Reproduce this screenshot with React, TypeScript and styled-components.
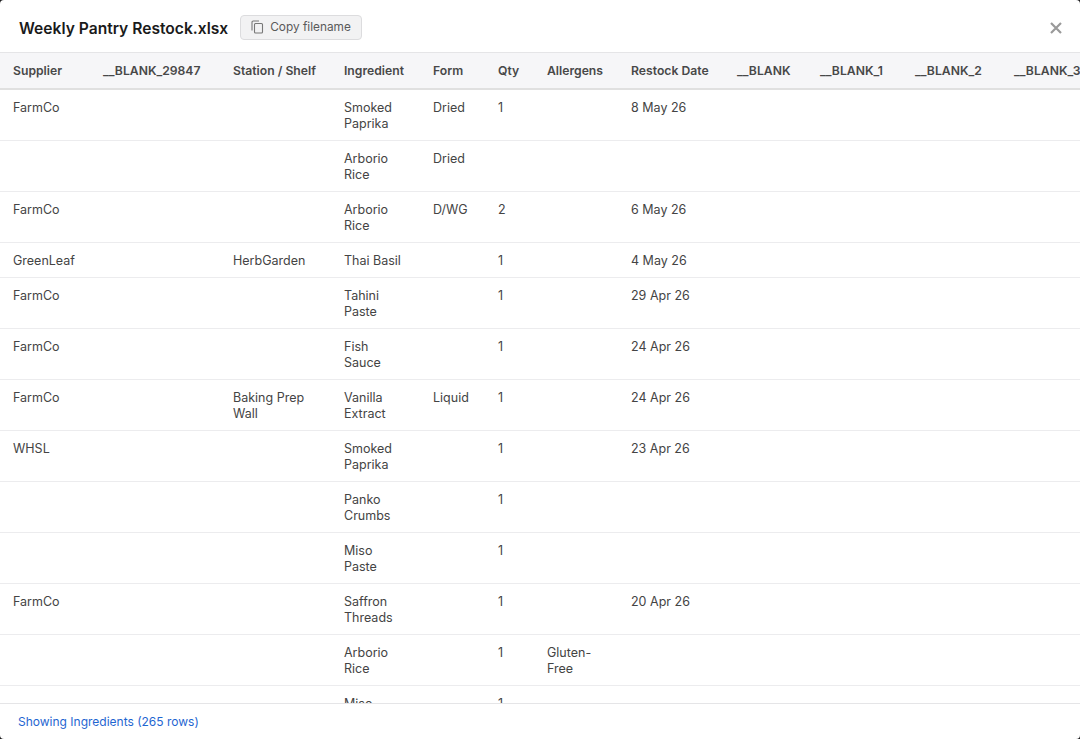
import React from 'react'
import styled, { createGlobalStyle } from 'styled-components'

const GlobalStyle = createGlobalStyle`
  html, body {
    margin: 0;
    height: 100%;
    background: #1c1c1e;
    font-family: Inter, "Liberation Sans", sans-serif;
  }
  #root {
    height: 100%;
  }
`

const Modal = styled.div`
  height: 739px;
  width: 1080px;
  display: flex;
  flex-direction: column;
  background: #fff;
  border-radius: 4px;
  overflow: hidden;
`

const Header = styled.header`
  height: 49px;
  flex-shrink: 0;
  display: flex;
  align-items: center;
  gap: 12px;
  padding: 3px 18px 0 19px;
  border-bottom: 1px solid #e5e5e7;
`

const Title = styled.h2`
  margin: 1px 0 0;
  font-size: 15.6px;
  font-weight: 600;
  color: #1a1a1a;
  white-space: nowrap;
`

const CopyButton = styled.button`
  display: flex;
  align-items: center;
  gap: 6px;
  height: 25px;
  padding: 0 10px;
  margin-top: -1px;
  background: #f2f2f3;
  border: 1px solid #dcdcde;
  border-radius: 4px;
  font: inherit;
  font-size: 11.85px;
  color: #5a5a5a;
`

const CloseButton = styled.button`
  margin-left: auto;
  margin-top: 1px;
  padding: 0;
  display: flex;
  background: none;
  border: 0;
  color: #9a9a9a;
`

const TableWrap = styled.div`
  flex: 1;
  min-height: 0;
  overflow: hidden;
`

const Table = styled.table`
  table-layout: fixed;
  width: 1100px;
  border-collapse: separate;
  border-spacing: 0;
  font-size: 12.5px;
  line-height: 16px;
  color: #444;
`

const HeadCell = styled.th`
  height: 35px;
  padding: 0 13px;
  text-align: left;
  font-size: 12.2px;
  font-weight: 600;
  color: #484848;
  white-space: nowrap;
  background: #f6f6f8;
  border-bottom: 2px solid #e0e0e0;
`

const Cell = styled.td`
  padding: 10px 13px 8px;
  vertical-align: top;
  border-bottom: 1px solid #ececee;
`

const Footer = styled.footer`
  height: 35px;
  flex-shrink: 0;
  display: flex;
  align-items: center;
  padding: 0 18px;
  border-top: 1px solid #e5e5e7;
  font-size: 12px;
  color: #1f66d1;
`

const columns: [string, number][] = [
  ['Supplier', 90],
  ['__BLANK_29847', 130],
  ['Station / Shelf', 111],
  ['Ingredient', 89],
  ['Form', 65],
  ['Qty', 49],
  ['Allergens', 84],
  ['Restock Date', 106],
  ['__BLANK', 83],
  ['__BLANK_1', 95],
  ['__BLANK_2', 99],
  ['__BLANK_3', 99],
]

type Row = {
  supplier?: string
  station?: string
  ingredient: string
  form?: string
  qty?: string
  allergens?: string
  date?: string
}

const rows: Row[] = [
  { supplier: 'FarmCo', ingredient: 'Smoked Paprika', form: 'Dried', qty: '1', date: '8 May 26' },
  { ingredient: 'Arborio Rice', form: 'Dried' },
  { supplier: 'FarmCo', ingredient: 'Arborio Rice', form: 'D/WG', qty: '2', date: '6 May 26' },
  { supplier: 'GreenLeaf', station: 'HerbGarden', ingredient: 'Thai Basil', qty: '1', date: '4 May 26' },
  { supplier: 'FarmCo', ingredient: 'Tahini Paste', qty: '1', date: '29 Apr 26' },
  { supplier: 'FarmCo', ingredient: 'Fish Sauce', qty: '1', date: '24 Apr 26' },
  { supplier: 'FarmCo', station: 'Baking Prep Wall', ingredient: 'Vanilla Extract', form: 'Liquid', qty: '1', date: '24 Apr 26' },
  { supplier: 'WHSL', ingredient: 'Smoked Paprika', qty: '1', date: '23 Apr 26' },
  { ingredient: 'Panko Crumbs', qty: '1' },
  { ingredient: 'Miso Paste', qty: '1' },
  { supplier: 'FarmCo', ingredient: 'Saffron Threads', qty: '1', date: '20 Apr 26' },
  { ingredient: 'Arborio Rice', qty: '1', allergens: 'Gluten-Free' },
  { ingredient: 'Miso Paste', qty: '1' },
]

const CopyIcon = () => (
  <svg width="13" height="14" viewBox="0 0 13 14" fill="none" stroke="#777" strokeWidth="1.1">
    <path d="M1 10.5V2.2C1 1.5 1.5 1 2.2 1H8" />
    <rect x="3.5" y="3.5" width="8" height="9.5" rx="1" />
  </svg>
)

const CloseIcon = () => (
  <svg width="12" height="12" viewBox="0 0 12 12" stroke="currentColor" strokeWidth="2.2">
    <path d="M1 1l10 10M11 1L1 11" />
  </svg>
)

const App = () => {
  return (
    <>
      <GlobalStyle />
      <Modal>
        <Header>
          <Title>Weekly Pantry Restock.xlsx</Title>
          <CopyButton>
            <CopyIcon />
            Copy filename
          </CopyButton>
          <CloseButton aria-label="Close">
            <CloseIcon />
          </CloseButton>
        </Header>
        <TableWrap>
          <Table>
            <colgroup>
              {columns.map(([name, width]) => (
                <col key={name} style={{ width }} />
              ))}
            </colgroup>
            <thead>
              <tr>
                {columns.map(([name]) => (
                  <HeadCell key={name}>{name}</HeadCell>
                ))}
              </tr>
            </thead>
            <tbody>
              {rows.map((row, i) => (
                <tr key={i}>
                  <Cell>{row.supplier}</Cell>
                  <Cell />
                  <Cell>{row.station}</Cell>
                  <Cell>{row.ingredient}</Cell>
                  <Cell>{row.form}</Cell>
                  <Cell>{row.qty}</Cell>
                  <Cell>{row.allergens}</Cell>
                  <Cell>{row.date}</Cell>
                  <Cell />
                  <Cell />
                  <Cell />
                  <Cell />
                </tr>
              ))}
            </tbody>
          </Table>
        </TableWrap>
        <Footer>Showing Ingredients (265 rows)</Footer>
      </Modal>
    </>
  )
}

export default App
